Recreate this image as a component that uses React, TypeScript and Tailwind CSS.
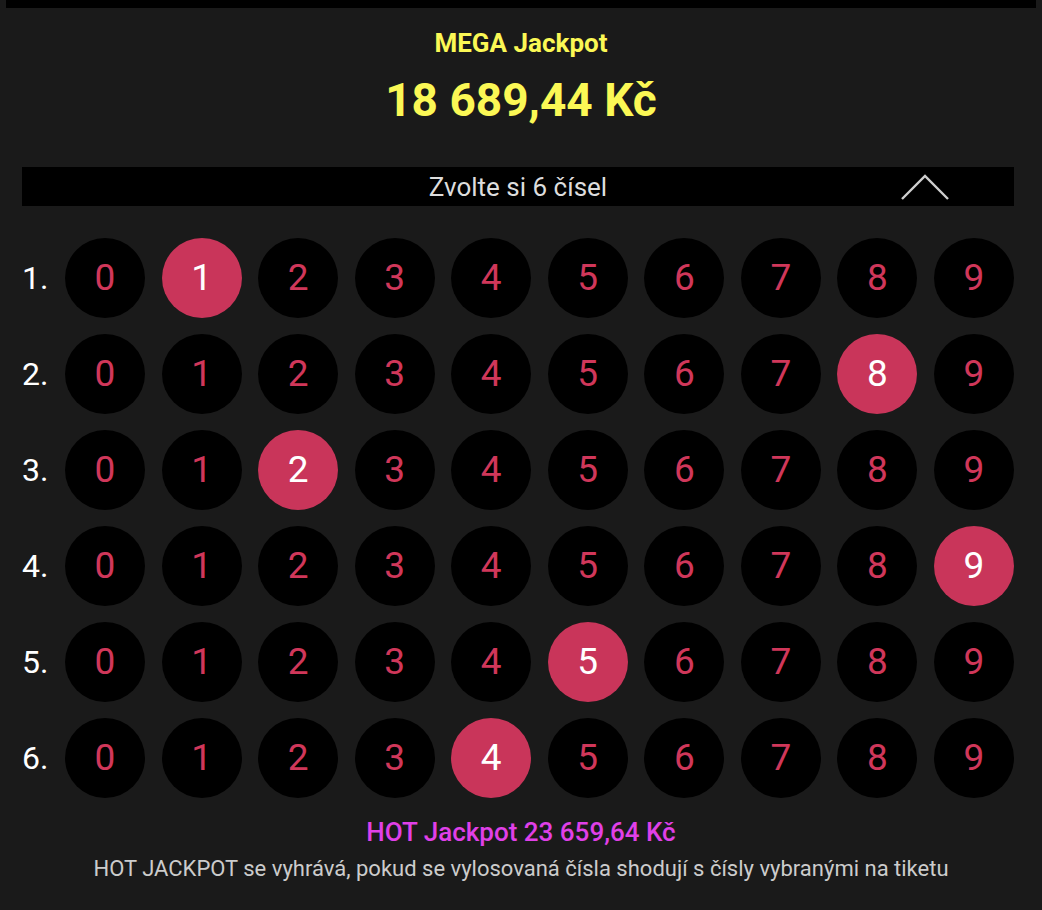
import React, { useState } from 'react';

const ROWS = 6;
const DIGITS = [0, 1, 2, 3, 4, 5, 6, 7, 8, 9];

export default function App() {
  const [picked, setPicked] = useState<number[]>([1, 8, 2, 9, 5, 4]);

  const pick = (row: number, digit: number) => {
    setPicked((prev) => prev.map((d, i) => (i === row ? digit : d)));
  };

  return (
    <div
      className="min-h-[910px] w-full bg-[#1a1a1a] pb-6"
      style={{ fontFamily: 'Roboto, "Noto Sans", sans-serif' }}
    >
      <div className="mx-[6px] h-[8px] bg-black" />

      {/* Jackpot */}
      <div className="flex flex-col items-center pt-[20px]">
        <div className="text-[26px] font-bold leading-[30px] text-[#fbf855]">MEGA Jackpot</div>
        <div className="mt-[14px] text-[46px] font-bold leading-[56px] text-[#fbf855]">18 689,44 Kč</div>
      </div>

      {/* Header */}
      <div className="relative ml-[22px] mr-[28px] mt-[39px] flex h-[39px] items-center justify-center bg-black">
        <span className="text-[26px] leading-none text-[#dddddd]">Zvolte si 6 čísel</span>
        <svg
          className="absolute right-[64px] top-[7px]"
          width="50"
          height="26"
          viewBox="0 0 50 26"
          fill="none"
        >
          <path d="M2 25 L25 2 L48 25" stroke="#cfcfcf" strokeWidth="2.4" />
        </svg>
      </div>

      {/* Grid */}
      <div className="ml-[22px] mr-[28px] mt-[32px] flex flex-col gap-[16px]">
        {Array.from({ length: ROWS }).map((_, r) => (
          <div key={r} className="flex items-center">
            <div className="w-[43px] text-[32px] leading-none text-white">{r + 1}.</div>
            <div className="flex flex-1 justify-between">
              {DIGITS.map((d) => {
                const on = picked[r] === d;
                return (
                  <button
                    key={d}
                    onClick={() => pick(r, d)}
                    className={
                      on
                        ? 'flex h-[80px] w-[80px] items-center justify-center rounded-full bg-[#c9355a] text-[37px] text-white'
                        : 'flex h-[80px] w-[80px] items-center justify-center rounded-full bg-black text-[37px] text-[#d0375a]'
                    }
                  >
                    {d}
                  </button>
                );
              })}
            </div>
          </div>
        ))}
      </div>

      {/* Hot jackpot */}
      <div className="mt-[19px] flex flex-col items-center">
        <div className="text-[26px] font-medium leading-[30px] text-[#e040e8]">HOT Jackpot 23 659,64 Kč</div>
        <div className="mt-[8px] text-[22px] leading-[28px] text-[#cccccc]">
          HOT JACKPOT se vyhrává, pokud se vylosovaná čísla shodují s čísly vybranými na tiketu
        </div>
      </div>
    </div>
  );
}
